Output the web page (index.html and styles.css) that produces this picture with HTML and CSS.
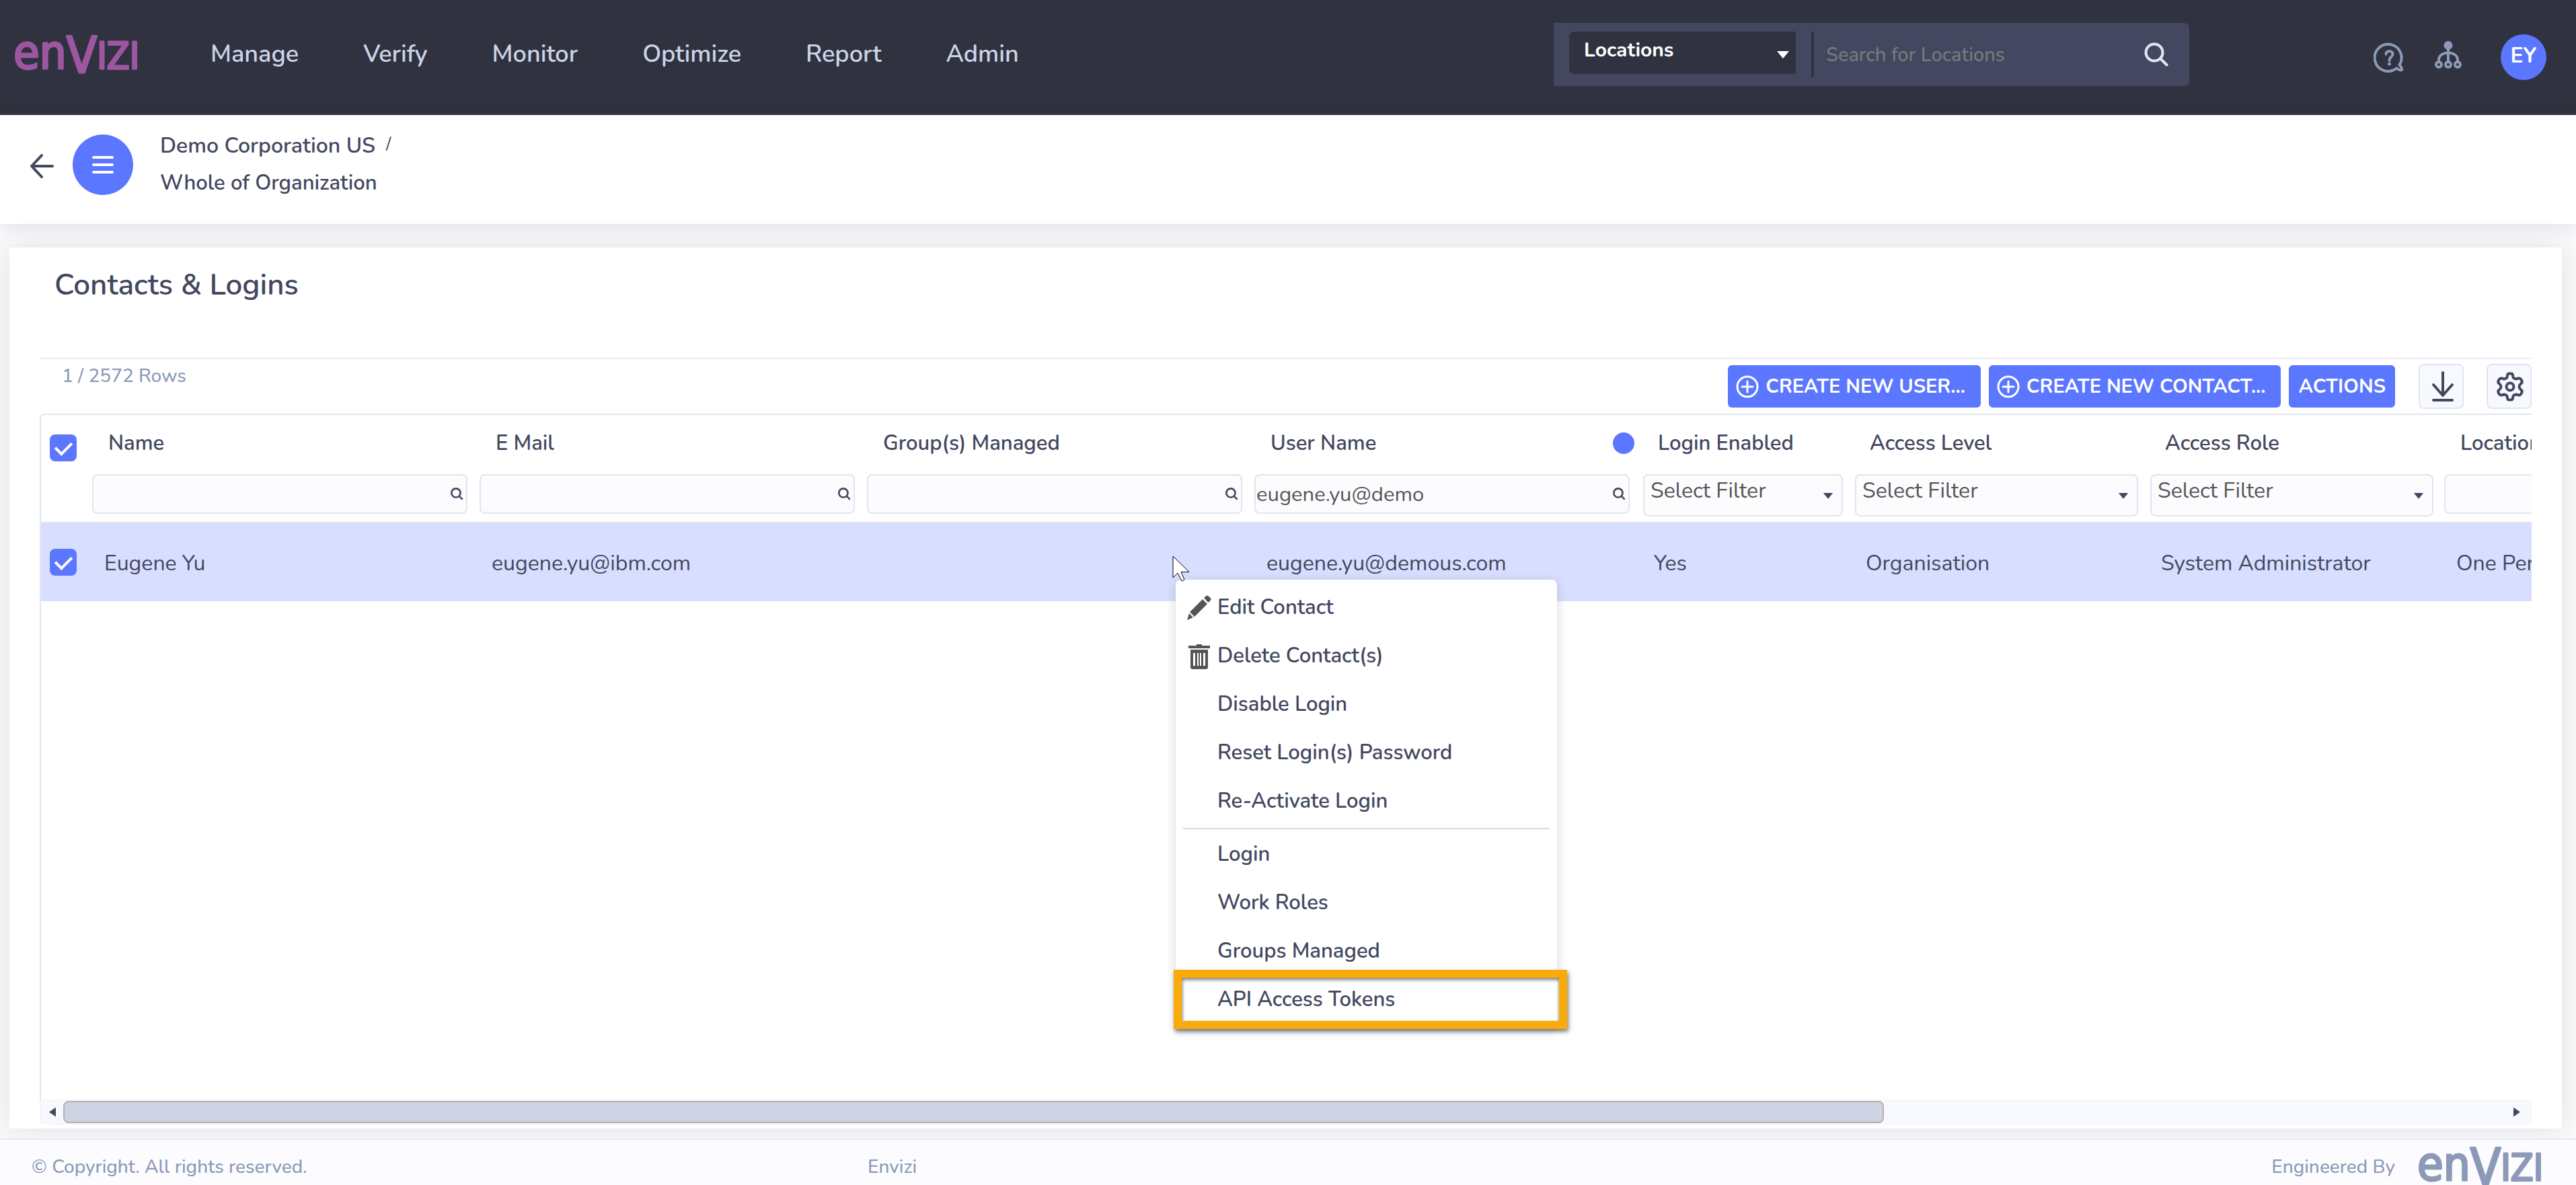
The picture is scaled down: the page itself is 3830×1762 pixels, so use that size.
FILE: index.html
```html
<!DOCTYPE html>
<html lang="en">
<head>
<meta charset="utf-8">
<title>Contacts &amp; Logins - Envizi</title>
<link rel="stylesheet" href="styles.css">
</head>
<body>
<svg class="defs" aria-hidden="true">
  <symbol id="i-search" viewBox="0 0 36 36"><circle cx="15" cy="15" r="12.500"/><path d="M24 24 33.500 33.500"/></symbol>
  <symbol id="i-caret" viewBox="0 0 20 12"><path d="M1 1H19L10 12Z"/></symbol>
  <symbol id="i-plus" viewBox="0 0 34 34"><circle cx="17" cy="17" r="15"/><path d="M17 9V25M9 17H25"/></symbol>
</svg>

<header class="topbar">
  <a class="logo" href="#" aria-label="Envizi">
    <svg class="wordmark" viewBox="0 0 184 60" role="img" aria-label="Envizi"><text x="0" y="51"><tspan class="wm-low">en</tspan><tspan class="wm-v" dy="6">V</tspan><tspan class="wm-cap" dy="-6">IZI</tspan></text></svg>
  </a>
  <nav class="nav" aria-label="Main">
    <a href="#">Manage</a>
    <a href="#">Verify</a>
    <a href="#">Monitor</a>
    <a href="#">Optimize</a>
    <a href="#">Report</a>
    <a href="#">Admin</a>
  </nav>
  <form class="search" role="search">
    <span class="scope">
      <select aria-label="Search scope"><option>Locations</option></select>
      <svg class="caret" aria-hidden="true"><use href="#i-caret"/></svg>
    </span>
    <input type="text" aria-label="Search for Locations" placeholder="Search for Locations">
    <button type="button" class="plain" aria-label="Search"><svg class="search-icon" aria-hidden="true"><use href="#i-search"/></svg></button>
  </form>
  <div class="tools">
    <button type="button" class="plain" aria-label="Help">
      <svg class="help-icon" viewBox="0 0 46 46" aria-hidden="true"><path d="M38.500 34.500A20 20 0 1 0 34 39.500C36.500 41 39 43 41 42.500S42 40.500 41.500 39C41 37.500 40 35.500 38.500 34.500Z"/><path d="M18.500 18.500C18.500 12.500 28.500 12.500 28.500 18.500C28.500 22.500 23.500 22.500 23.500 28"/><circle class="dot" cx="23.500" cy="33" r="2.500"/></svg>
    </button>
    <button type="button" class="plain" aria-label="Hierarchy">
      <svg class="tree-icon" viewBox="0 0 42 42" aria-hidden="true"><circle class="dot" cx="21" cy="6.500" r="6.500"/><path d="M21 6V31M7 30V28C7 14 35 14 35 28V30"/><circle cx="7" cy="35" r="4"/><circle cx="21" cy="35" r="4"/><circle cx="35" cy="35" r="4"/></svg>
    </button>
    <button type="button" class="avatar">EY</button>
  </div>
</header>

<div class="crumbbar">
  <a class="back" href="#" aria-label="Back"><svg viewBox="0 0 36 36" aria-hidden="true"><path d="M34 18H3M18 2 3 18 18 34"/></svg></a>
  <button type="button" class="menu-btn" aria-label="Menu"><svg viewBox="0 0 32 28" aria-hidden="true"><path d="M2 3H30M2 14H30M2 25H30"/></svg></button>
  <nav class="crumbs" aria-label="Breadcrumb">
    <div class="crumb-root"><a href="#">Demo Corporation US</a><span class="slash">/</span></div>
    <div><a href="#">Whole of Organization</a></div>
  </nav>
</div>

<main class="card">
  <h1>Contacts &amp; Logins</h1>
  <section class="grid">
    <div class="toolbar">
      <span class="count">1 / 2572 Rows</span>
      <div class="actions">
        <button type="button" class="btn"><svg aria-hidden="true"><use href="#i-plus"/></svg>CREATE NEW USER...</button>
        <button type="button" class="btn"><svg aria-hidden="true"><use href="#i-plus"/></svg>CREATE NEW CONTACT...</button>
        <button type="button" class="btn short">ACTIONS</button>
      </div>
      <div class="icon-actions">
        <button type="button" class="icon-btn" aria-label="Download"><svg viewBox="0 0 44 48" aria-hidden="true"><path d="M24 3V37M10 21 24 37 38 21M10 44H38"/></svg></button>
        <button type="button" class="icon-btn" aria-label="Settings"><svg viewBox="0 0 44 48" aria-hidden="true"><circle cx="23" cy="24" r="5.500"/><path d="M21 4.500H25Q26.500 4.500 27 7L27.500 10Q28.500 12 32 12.500L35.500 11.500Q38 11 39.500 13.500L40.500 15.500Q41.500 18 39 19.500Q34 24 39 28.500Q41.500 30 40.500 32.500L39.500 34.500Q38 37 35.500 36.500L32 35.500Q28.500 36 27.500 38L27 41Q26.500 43.500 25 43.500H21Q19.500 43.500 19 41L18.500 38Q17.500 36 14 35.500L10.500 36.500Q8 37 6.500 34.500L5.500 32.500Q4.500 30 7 28.500Q12 24 7 19.500Q4.500 18 5.500 15.500L6.500 13.500Q8 11 10.500 11.500L14 12.500Q17.500 12 18.500 10L19 7Q19.500 4.500 21 4.500Z"/></svg></button>
      </div>
    </div>

    <div class="table-wrap">
      <table>
        <colgroup><col class="c-check"><col class="c-wide"><col class="c-wide"><col class="c-wide"><col class="c-wide"><col class="c-small"><col class="c-mid"><col class="c-mid"><col class="c-wide"></colgroup>
        <thead>
          <tr class="heads">
            <th class="check"><input type="checkbox" checked aria-label="Select all rows"></th>
            <th>Name</th>
            <th>E Mail</th>
            <th>Group(s) Managed</th>
            <th><span class="filtered">User Name<i></i></span></th>
            <th>Login Enabled</th>
            <th>Access Level</th>
            <th>Access Role</th>
            <th>Locations</th>
          </tr>
          <tr class="filters">
            <td></td>
            <td><span class="field"><input type="text" aria-label="Filter Name"><svg class="find" aria-hidden="true"><use href="#i-search"/></svg></span></td>
            <td><span class="field"><input type="text" aria-label="Filter E Mail"><svg class="find" aria-hidden="true"><use href="#i-search"/></svg></span></td>
            <td><span class="field"><input type="text" aria-label="Filter Group(s) Managed"><svg class="find" aria-hidden="true"><use href="#i-search"/></svg></span></td>
            <td><span class="field"><input type="text" aria-label="Filter User Name" value="eugene.yu@demo"><svg class="find" aria-hidden="true"><use href="#i-search"/></svg></span></td>
            <td class="pick"><span class="field"><select aria-label="Filter Login Enabled"><option>Select Filter</option></select><svg class="caret" aria-hidden="true"><use href="#i-caret"/></svg></span></td>
            <td class="pick"><span class="field"><select aria-label="Filter Access Level"><option>Select Filter</option></select><svg class="caret" aria-hidden="true"><use href="#i-caret"/></svg></span></td>
            <td class="pick"><span class="field"><select aria-label="Filter Access Role"><option>Select Filter</option></select><svg class="caret" aria-hidden="true"><use href="#i-caret"/></svg></span></td>
            <td><span class="field"><input type="text" aria-label="Filter Locations"></span></td>
          </tr>
        </thead>
        <tbody>
          <tr>
            <td class="check"><input type="checkbox" checked aria-label="Select Eugene Yu"></td>
            <td>Eugene Yu</td>
            <td>eugene.yu@ibm.com</td>
            <td></td>
            <td>eugene.yu@demous.com</td>
            <td>Yes</td>
            <td>Organisation</td>
            <td>System Administrator</td>
            <td>One Per Location</td>
          </tr>
        </tbody>
      </table>
    </div>

    <div class="scrollbar" aria-hidden="true">
      <svg viewBox="0 0 10 14"><path d="M10 0V14L0 7Z"/></svg>
      <span class="track"><span class="thumb"></span></span>
      <svg viewBox="0 0 10 14"><path d="M0 0V14L10 7Z"/></svg>
    </div>
  </section>
</main>

<footer class="footer">
  <span class="copy">© Copyright. All rights reserved.</span>
  <span class="product">Envizi</span>
  <span class="by">Engineered By</span>
  <svg class="wordmark" viewBox="0 0 184 60" role="img" aria-label="Envizi"><text x="0" y="51"><tspan class="wm-low">en</tspan><tspan class="wm-v" dy="6">V</tspan><tspan class="wm-cap" dy="-6">IZI</tspan></text></svg>
</footer>

<ul class="context-menu">
  <li><button type="button"><svg viewBox="0 0 36 38" aria-hidden="true"><path d="M25 4 29 0.500Q31 0 32.500 2L35 4.500Q36 6 35 7.500L31.500 11ZM23 6 30 13 11 32 4 25ZM3 27 9 33 0 37Z"/></svg>Edit Contact</button></li>
  <li><button type="button"><svg viewBox="0 0 36 38" aria-hidden="true"><path fill-rule="evenodd" d="M14 1H22V3H34V7H2V3H14ZM5 9H31V35Q31 38 28 38H8Q5 38 5 35ZM9 14V33H12V14ZM15 14V33H17V14ZM19 14V33H21V14ZM24 14V33H27V14Z"/></svg>Delete Contact(s)</button></li>
  <li><button type="button">Disable Login</button></li>
  <li><button type="button">Reset Login(s) Password</button></li>
  <li><button type="button">Re-Activate Login</button></li>
  <li class="sep"></li>
  <li><button type="button">Login</button></li>
  <li><button type="button">Work Roles</button></li>
  <li><button type="button">Groups Managed</button></li>
  <li class="marked"><button type="button">API Access Tokens</button></li>
</ul>
<svg class="cursor" viewBox="0 0 26 40" aria-hidden="true"><path d="M1 1V33L8 26L14 38L18 36L13 24.500H25Z"/></svg>
</body>
</html>
```
FILE: styles.css
```css
:root {
  --ink: #434860;
  --slate: #8c9ab8;
  --blue: #5b76ff;
  --dark: #30323f;
  --line: #e0e5f2;
  --field: #fcfcff;
}
* { box-sizing: border-box; }
body {
  margin: 0;
  min-height: 100vh;
  display: flex;
  flex-direction: column;
  position: relative;
  overflow-x: hidden;
  background: #fafafc;
  color: var(--ink);
  font-family: Nunito, "Open Sans", "Noto Sans", sans-serif;
  font-size: 32px;
  line-height: 40px;
}
button, input, select { font: inherit; color: inherit; }
button { cursor: pointer; }
a { color: inherit; text-decoration: none; }
.defs { position: absolute; width: 0; height: 0; }
.plain { padding: 0; border: 0; background: none; }
svg { flex: none; display: block; }

.wordmark { width: 184px; height: 60px; fill: currentColor; font-family: "DejaVu Sans Condensed", sans-serif; font-weight: 400; overflow: visible; stroke: currentColor; stroke-width: 3; stroke-linejoin: round; }
.wm-low { font-size: 70px; }
.wm-v { font-size: 74px; }
.wm-cap { font-size: 55px; }

/* top bar */
.topbar { display: flex; height: 171px; padding: 34px 44px 0 20px; background: var(--dark); color: #ccd4e8; }
.logo { color: #9d56a0; padding-top: 17px; }
.nav { display: flex; gap: 96px; margin-left: 109px; font-size: 36px; font-weight: 600; line-height: 94px; }
.search { display: flex; align-items: flex-start; width: 945px; height: 94px; margin-left: auto; padding: 13px 31px 0 23px; background: #434860; border-radius: 0 8px 8px 0; }
.scope { position: relative; display: block; width: 337px; height: 63px; margin-right: 23px; }
.scope select { appearance: none; width: 100%; height: 63px; padding: 0 22px 8px; border: 0; border-radius: 8px 0 0 8px; background: var(--dark); color: #fff; font-size: 30px; font-weight: 700; }
.caret { position: absolute; right: 14px; bottom: 26px; width: 20px; height: 12px; fill: currentColor; }
.scope .caret { right: 9px; bottom: 23px; color: #fff; }
.search input { flex: 1; min-width: 0; height: 68px; padding: 0 18px; border: 0; border-left: 4px solid var(--dark); background: none; font-size: 29px; font-weight: 500; }
.search input::placeholder { color: #7a7a7c; }
.search-icon { width: 36px; height: 36px; margin-top: 16px; fill: none; stroke: #dfe5f2; stroke-width: 4; stroke-linecap: round; }
.tools { display: flex; align-items: flex-start; margin-left: 274px; }
.help-icon, .tree-icon { fill: none; stroke: var(--slate); stroke-width: 4; stroke-linecap: round; stroke-linejoin: round; }
.help-icon { width: 46px; height: 46px; margin-top: 28px; }
.tree-icon { width: 42px; height: 42px; margin: 27px 57px 0 44px; }
.dot { fill: var(--slate); stroke: none; }
.avatar { width: 68px; height: 68px; margin-top: 17px; padding: 0 0 4px; border: 0; border-radius: 50%; background: var(--blue); color: #fff; font-weight: 700; }

/* breadcrumb bar */
.crumbbar { display: flex; align-items: flex-start; height: 162px; padding: 17px 44px; background: #fff; box-shadow: 0 4px 24px rgba(48, 50, 63, .12); }
.back svg { width: 36px; height: 36px; margin-top: 41px; fill: none; stroke: var(--ink); stroke-width: 4; stroke-linecap: round; stroke-linejoin: round; }
.menu-btn { display: grid; place-items: center; width: 90px; height: 90px; margin: 12px 40px 0 28px; padding: 0; border: 0; border-radius: 50%; background: var(--blue); }
.menu-btn svg { width: 32px; height: 28px; stroke: #fff; stroke-width: 4; stroke-linecap: round; }
.crumbs { font-size: 31px; font-weight: 600; line-height: 56px; }
.crumb-root { display: flex; height: 56px; font-size: 32px; line-height: 58px; }
.slash { margin-left: 16px; font-size: 26px; font-weight: 400; line-height: 52px; }

/* card */
.card { flex: 1; display: flex; flex-direction: column; margin: 35px 21px 15px 14px; padding: 26px 45px 6px; background: #fff; box-shadow: 0 0 40px rgba(48, 50, 63, .12); }
h1 { margin: 0 0 78px 22px; font-size: 44px; font-weight: 600; line-height: 60px; }
.grid { flex: 1; display: flex; flex-direction: column; border-top: 2px solid #e8ecf8; }
.toolbar { display: flex; align-items: flex-start; height: 81px; padding: 7px 0 0 33px; }
.count { color: var(--slate); font-size: 28px; font-weight: 500; line-height: 36px; }
.actions { display: flex; gap: 12px; margin: 2px 35px 0 auto; }
.btn { display: flex; align-items: center; gap: 10px; height: 63px; padding: 0 23px 0 12px; border: 0; border-radius: 6px; background: var(--blue); color: #fff; font-size: 29px; font-weight: 700; }
.btn svg { width: 34px; height: 34px; fill: none; stroke: #fff; stroke-width: 3; stroke-linecap: round; }
.short { padding: 0 14px; }
.icon-actions { display: flex; gap: 34px; }
.icon-btn { display: grid; place-items: center; width: 67px; height: 67px; padding: 0; border: 2px solid var(--line); border-radius: 8px; background: #f8f9ff; }
.icon-btn svg { width: 44px; height: 48px; fill: none; stroke: var(--ink); stroke-width: 4; stroke-linecap: round; stroke-linejoin: round; }

.table-wrap { flex: 1; overflow: hidden; border-top: 2px solid var(--line); border-left: 2px solid var(--line); border-radius: 8px 0 0 0; }
table { width: 4141px; table-layout: fixed; border-collapse: collapse; }
.c-check { width: 68px; }
.c-wide { width: 576px; }
.c-small { width: 315px; }
.c-mid { width: 439px; }
th, td { padding: 0; text-align: left; }
.heads th { height: 84px; padding-left: 32px; font-size: 31px; font-weight: 600; }
.filtered { display: flex; align-items: center; justify-content: space-between; padding-right: 3px; }
.filtered i { width: 32px; height: 32px; border-radius: 50%; background: var(--blue); }
th.check, td.check { padding: 0 0 0 13px !important; vertical-align: top; }
.check input { appearance: none; display: block; width: 40px; height: 40px; margin: 0; border-radius: 8px; background: var(--blue); }
.check input::after { content: ""; display: block; width: 11px; height: 20px; margin: 6px 0 0 13px; border: solid #fff; border-width: 0 4px 4px 0; rotate: 45deg; }
.heads .check input { margin-top: 29px; }
.filters td { height: 76px; padding: 4px 10px 0 8px; vertical-align: top; border-bottom: 2px solid var(--line); }
.filters .pick { padding: 4px 8px 0 10px; }
.field { position: relative; display: block; color: #555; }
.field input, .field select { display: block; width: 100%; height: 59px; padding: 0 40px 0 1px; border: 2px solid var(--line); border-radius: 8px; background: var(--field); }
.field input { font-size: 31px; }
.field select { appearance: none; height: 63px; padding: 0 40px 14px 9px; }
.field svg { color: var(--ink); }
.field .caret { width: 16px; height: 10px; }
.find { position: absolute; right: 6px; top: 20px; width: 19px; height: 19px; fill: none; stroke: currentColor; stroke-width: 5; }
tbody td { height: 117px; padding: 4px 0 0 26px; background: #d8deff; }
tbody .check input { margin-top: 38px; }

.scrollbar { display: flex; align-items: center; height: 37px; padding: 0 15px 0 12px; border: 2px solid #f5f5f5; background: #f8f9ff; border-radius: 0 0 6px 6px; }
.scrollbar svg { width: 10px; height: 15px; fill: var(--ink); }
.track { flex: 1; padding: 0 0 0 11px; }
.thumb { display: block; width: 74.3%; height: 33px; border: 2px solid #b0b0b0; border-radius: 8px; background: #ced4e4; }

/* footer */
.footer { display: grid; grid-template-columns: 1243px 1fr auto auto; height: 69px; padding: 0 52px 0 47px; border-top: 2px solid #e6e8f8; background: #fcfcfe; color: var(--slate); font-size: 28px; font-weight: 500; line-height: 80px; position: relative; }
.footer > * { height: 67px; }
.by { padding-right: 33px; }
.footer .wordmark { height: 60px; margin-top: 9px; }

/* context menu */
.context-menu { position: absolute; left: 1748px; top: 862px; width: 567px; margin: 0; padding: 5px 0; list-style: none; border-radius: 8px; background: #fff; box-shadow: 0 4px 16px rgba(48, 50, 63, .2); }
.context-menu button { display: block; position: relative; width: 100%; height: 72px; padding: 0 0 0 62px; border: 0; background: none; text-align: left; font-size: 31px; font-weight: 600; }
.context-menu svg { position: absolute; left: 17px; top: 18px; width: 36px; height: 38px; fill: #555; }
.sep { height: 2px; margin: 4px 11px 1px; background: #dcdcdc; }
.marked { position: relative; }
.marked::after { content: ""; position: absolute; inset: -8px -15px -8px -3px; border: 12px solid #f8ab0a; box-shadow: 2px 4px 6px rgba(0, 0, 0, .5), inset 1px 3px 5px rgba(0, 0, 0, .5); pointer-events: none; }
.cursor { position: absolute; left: 1743px; top: 826px; width: 26px; height: 40px; fill: #fff; stroke: #000; stroke-width: 1; }
```
